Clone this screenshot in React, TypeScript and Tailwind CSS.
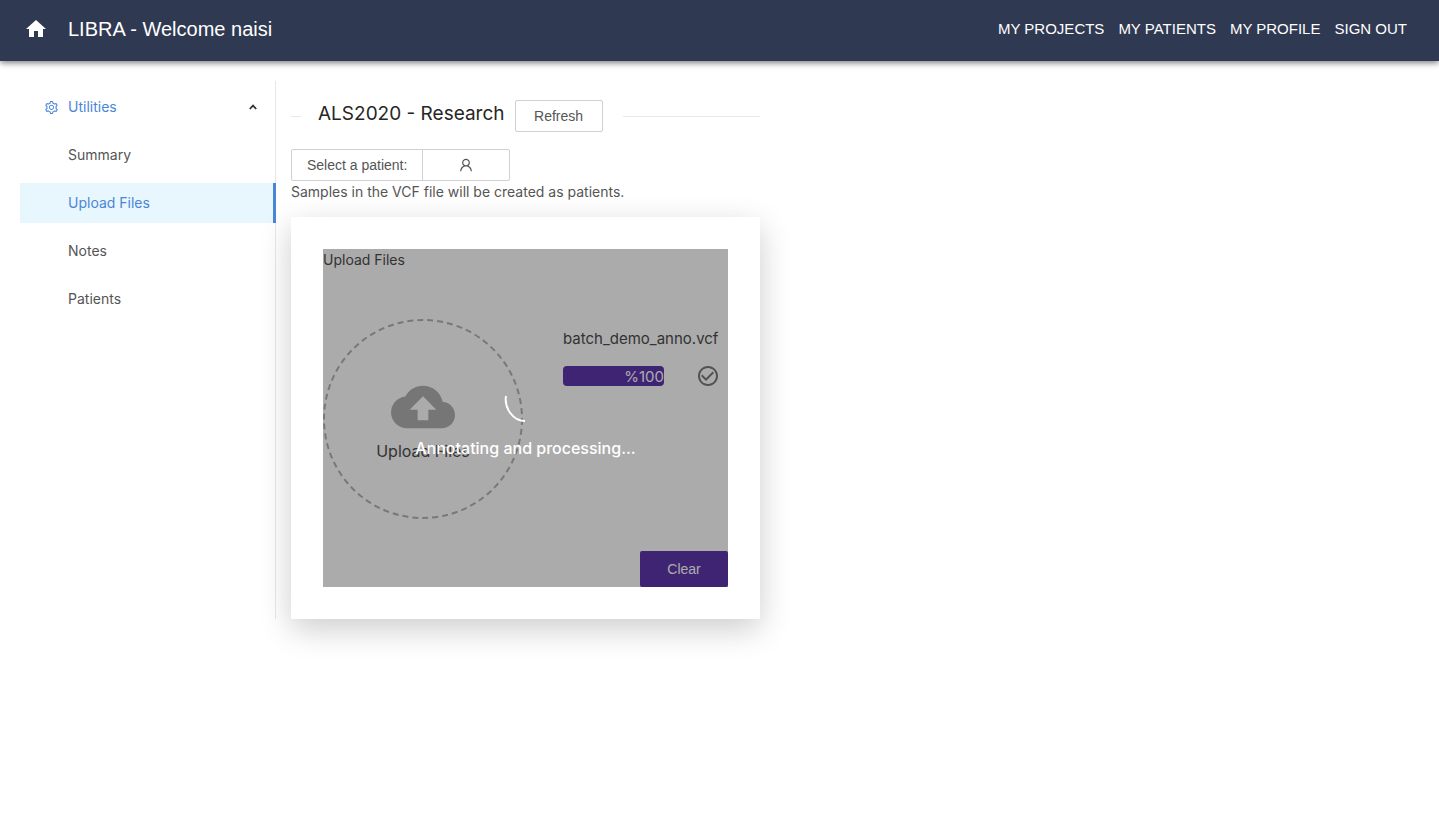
import { AiOutlineSetting, AiOutlineUser } from "react-icons/ai";
import { MdCheckCircleOutline, MdCloudUpload, MdHome } from "react-icons/md";

const navLinks = ["My Projects", "My Patients", "My Profile", "Sign Out"];
const menuItems = ["Summary", "Upload Files", "Notes", "Patients"];

function Header() {
  return (
    <header className="flex h-[61px] items-center bg-[#303952] px-6 pb-1 font-['Liberation_Sans',sans-serif] text-white shadow-[0_2px_6px_rgba(0,0,0,0.5)]">
      <a href="#home" aria-label="Home" className="mr-5">
        <MdHome size={24} />
      </a>
      <h1 className="text-xl">LIBRA - Welcome naisi</h1>
      <nav className="ml-auto mr-2 flex gap-3.5 text-[15px] uppercase">
        {navLinks.map((label) => (
          <a key={label} href="#nav">
            {label}
          </a>
        ))}
      </nav>
    </header>
  );
}

function Sidebar() {
  return (
    <aside className="w-64 shrink-0 border-r border-[#e8e8e8] pt-1.5">
      <button type="button" aria-expanded="true" className="flex h-10 w-full items-center pl-6 pr-[17px] text-[#4a86d8]">
        <AiOutlineSetting size={15} className="mr-[9px]" />
        <span>Utilities</span>
        <svg viewBox="0 0 10 10" className="ml-auto size-2.5 text-[#333]" fill="none" stroke="currentColor" strokeWidth="1.8" aria-hidden="true">
          <path d="M1.8 7 5 3.6 8.2 7" />
        </svg>
      </button>
      <ul className="mt-2 flex flex-col gap-2">
        {menuItems.map((label) => (
          <li key={label} className="-mr-px">
            <a
              href="#menu"
              className={
                label === "Upload Files"
                  ? "flex h-10 items-center border-r-3 border-[#4a86d8] bg-[#e8f6fe] pl-12 text-[#4a86d8]"
                  : "flex h-10 items-center pl-12"
              }
            >
              {label}
            </a>
          </li>
        ))}
      </ul>
    </aside>
  );
}

function UploadCard() {
  return (
    <section className="mt-3.5 bg-white p-8 shadow-[0_10px_30px_rgba(0,0,0,0.2)]">
      <div className="relative text-[#4d4d4d]">
        <div className="h-[70px]">Upload Files</div>
        <div className="flex justify-between">
          <button
            type="button"
            className="relative flex size-50 flex-col items-center justify-center rounded-full text-base"
          >
            <svg viewBox="0 0 200 200" className="absolute inset-0 size-full" fill="none" aria-hidden="true">
              <circle cx="100" cy="100" r="99" stroke="#b4b4b4" strokeWidth="2" strokeDasharray="6 4" />
            </svg>
            <MdCloudUpload size={64} className="text-[#b1b1b1]" />
            <span>Upload Files</span>
          </button>
          <div className="mt-2 w-[165px] pr-2">
            <div className="text-[15px] leading-6">batch_demo_anno.vcf</div>
            <div className="mt-[13px] flex items-center justify-between">
              <div className="h-5 w-[101px] rounded bg-[#5f36ad] text-right text-[15px] leading-[22px] text-white">%100</div>
              <MdCheckCircleOutline size={24} className="text-[#7a7a7a]" />
            </div>
          </div>
        </div>
        <div className="mt-8 flex justify-end">
          <button
            type="button"
            className="h-9 w-22 rounded-xs bg-[#5f36ad] font-['Liberation_Sans',sans-serif] text-white"
          >
            Clear
          </button>
        </div>
        <div
          role="status"
          className="absolute inset-0 flex flex-col items-center justify-center gap-3 bg-black/33 pt-1 text-base font-medium text-white"
        >
          <svg viewBox="0 0 44 44" className="size-11" fill="none" stroke="currentColor" strokeWidth="2" aria-hidden="true">
            <path d="M2 16C0 28 9 41 21 41" />
          </svg>
          <span>Annotating and processing...</span>
        </div>
      </div>
    </section>
  );
}

export default function App() {
  return (
    <div className="min-h-screen bg-white font-['Inter',sans-serif] text-sm leading-[22px] text-[#555]">
      <Header />
      <main className="flex px-5 pt-5">
        <Sidebar />
        <div className="ml-[15px] max-w-[469px] flex-1 pt-[19px]">
          <div className="flex items-center">
            <span className="h-px w-2.5 bg-[#e8e8e8]" />
            <h2 className="ml-[17px] mr-2.5 pb-1 text-[19px] leading-7 text-[#262626]">ALS2020 - Research</h2>
            <button
              type="button"
              className="h-8 w-22 rounded-xs border border-[#d0d0d0] font-['Liberation_Sans',sans-serif]"
            >
              Refresh
            </button>
            <span className="ml-5 h-px flex-1 bg-[#e8e8e8]" />
          </div>
          <div className="mt-[17px] flex font-['Liberation_Sans',sans-serif]">
            <button type="button" className="h-8 rounded-l-xs border border-[#d0d0d0] px-[15px]">
              Select a patient:
            </button>
            <button
              type="button"
              aria-label="Patient"
              className="-ml-px flex h-8 w-22 items-center justify-center rounded-r-xs border border-[#d0d0d0]"
            >
              <AiOutlineUser size={16} />
            </button>
          </div>
          <p>Samples in the VCF file will be created as patients.</p>
          <UploadCard />
        </div>
      </main>
    </div>
  );
}
